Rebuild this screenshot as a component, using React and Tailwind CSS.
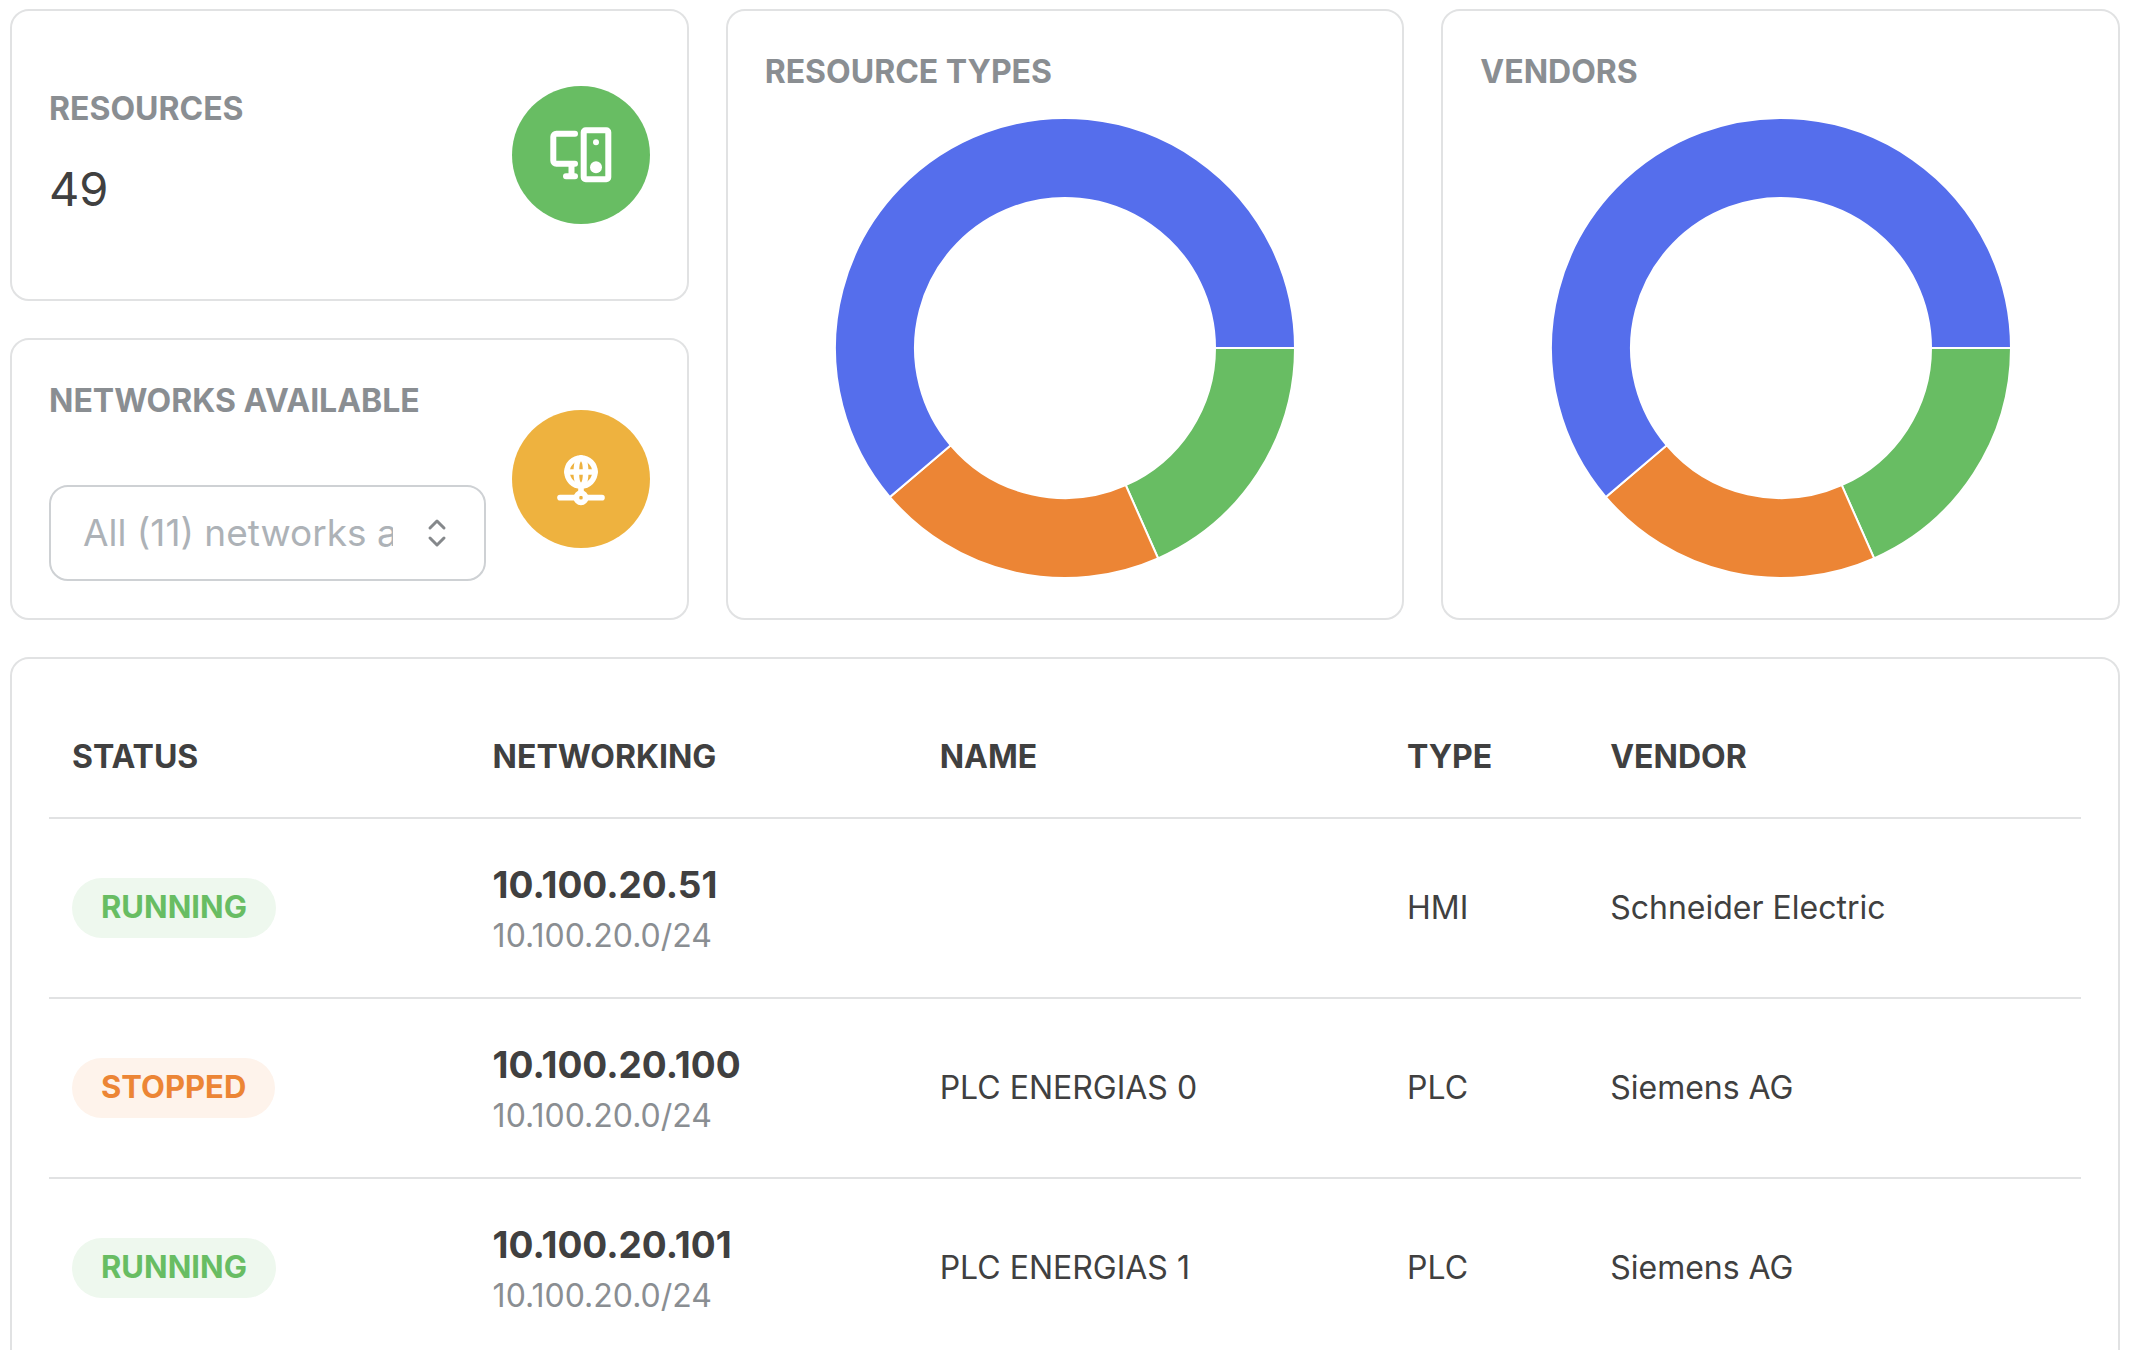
import React, { useState } from "react";
import { TbNetwork } from "react-icons/tb";

const COLORS = {
  green: "#68bd63",
  orange: "#ec8535",
  blue: "#556eec",
};

const resourceTypes = [
  { name: "PLC", value: 9, color: COLORS.green },
  { name: "HMI", value: 10, color: COLORS.orange },
  { name: "Other", value: 30, color: COLORS.blue },
];

const vendors = [
  { name: "Siemens AG", value: 9, color: COLORS.green },
  { name: "Schneider Electric", value: 10, color: COLORS.orange },
  { name: "Other", value: 30, color: COLORS.blue },
];

const resources = [
  {
    status: "RUNNING",
    ip: "10.100.20.51",
    network: "10.100.20.0/24",
    name: "",
    type: "HMI",
    vendor: "Schneider Electric",
  },
  {
    status: "STOPPED",
    ip: "10.100.20.100",
    network: "10.100.20.0/24",
    name: "PLC ENERGIAS 0",
    type: "PLC",
    vendor: "Siemens AG",
  },
  {
    status: "RUNNING",
    ip: "10.100.20.101",
    network: "10.100.20.0/24",
    name: "PLC ENERGIAS 1",
    type: "PLC",
    vendor: "Siemens AG",
  },
];

const badgeStyles = {
  RUNNING: "bg-[#eef8ee] text-[#68bd63]",
  STOPPED: "bg-[#fef3eb] text-[#ec8535]",
};

function Card({ className = "", children }) {
  return (
    <section
      className={`rounded-[19px] border-2 border-[#e1e2e3] bg-white p-[37px] ${className}`}
    >
      {children}
    </section>
  );
}

function CardTitle({ children }) {
  return (
    <h2 className="text-[32px] leading-[48px] font-bold text-[#8a8e92]">
      {children}
    </h2>
  );
}

function DevicesIcon() {
  return (
    <svg
      width="62"
      height="56"
      viewBox="0 0 62 56"
      fill="none"
      stroke="white"
      strokeWidth="6"
      strokeLinecap="round"
      strokeLinejoin="round"
      aria-hidden="true"
    >
      <path d="M25 6.7H6.3a3 3 0 0 0-3 3v24a3 3 0 0 0 3 3H25" />
      <path d="M21.5 37v12M16 49.3h9" />
      <rect x="33.7" y="3.3" width="24.6" height="49" rx="2" />
      <circle cx="46" cy="15.3" r="3" fill="white" stroke="none" />
      <circle cx="46" cy="40.3" r="6" fill="white" stroke="none" />
    </svg>
  );
}

function polar(angle, radius) {
  return `${233 + radius * Math.cos(angle)} ${233 + radius * Math.sin(angle)}`;
}

function Donut({ data, label }) {
  const total = data.reduce((sum, item) => sum + item.value, 0);
  let start = 0;
  const slices = data.map((item) => {
    const end = start + (item.value / total) * Math.PI * 2;
    const large = end - start > Math.PI ? 1 : 0;
    const d = `M${polar(start, 230)}A230 230 0 ${large} 1 ${polar(end, 230)}L${polar(end, 150)}A150 150 0 ${large} 0 ${polar(start, 150)}Z`;
    start = end;
    return { ...item, d };
  });

  return (
    <svg
      className="mx-auto mt-[19px] w-[466px] max-w-full"
      viewBox="0 0 466 466"
      role="img"
      aria-label={label}
    >
      {slices.map((slice) => (
        <path
          key={slice.name}
          d={slice.d}
          fill={slice.color}
          stroke="white"
          strokeWidth="2"
        />
      ))}
    </svg>
  );
}

function NetworkSelect() {
  const [network, setNetwork] = useState("all");

  return (
    <div className="relative mt-[60px]">
      <select
        id="network"
        value={network}
        onChange={(e) => setNetwork(e.target.value)}
        className="block h-[96px] w-full appearance-none rounded-[19px] border-2 border-[#ced1d4] bg-white pr-[91px] pl-[32px] text-[37px] text-[#adb2b7] outline-none"
      >
        <option value="all">All (11) networks available</option>
        <option value="10.100.20.0/24">10.100.20.0/24</option>
      </select>
      <svg
        className="pointer-events-none absolute inset-y-0 right-[38px] my-auto"
        width="22"
        height="32"
        viewBox="0 0 22 32"
        fill="none"
        stroke="#85888b"
        strokeWidth="3"
        strokeLinecap="round"
        strokeLinejoin="round"
        aria-hidden="true"
      >
        <path d="M4 11l7-7 7 7M4 21l7 7 7-7" />
      </svg>
    </div>
  );
}

function App() {
  return (
    <main className="flex flex-col gap-[37px] bg-white pt-[9px] pr-[14px] pl-[10px] font-['Inter',sans-serif] text-[#404040]">
      <div className="grid grid-cols-3 gap-[37px]">
        <div className="flex flex-col gap-[37px]">
          <Card className="flex flex-1 items-center justify-between">
            <div>
              <CardTitle>RESOURCES</CardTitle>
              <p className="mt-5 text-[47px] leading-[72px]">49</p>
            </div>
            <div className="flex size-[138px] shrink-0 items-center justify-center rounded-full bg-[#68bd63]">
              <DevicesIcon />
            </div>
          </Card>

          <Card className="flex items-center justify-between gap-[26px]">
            <div className="min-w-0 flex-1">
              <label htmlFor="network">
                <CardTitle>NETWORKS AVAILABLE</CardTitle>
              </label>
              <NetworkSelect />
            </div>
            <div className="flex size-[138px] shrink-0 items-center justify-center rounded-full bg-[#eeb23f] text-white">
              <TbNetwork size={56} strokeWidth={2.4} />
            </div>
          </Card>
        </div>

        <Card>
          <CardTitle>RESOURCE TYPES</CardTitle>
          <Donut data={resourceTypes} label="Resource types" />
        </Card>

        <Card>
          <CardTitle>VENDORS</CardTitle>
          <Donut data={vendors} label="Vendors" />
        </Card>
      </div>

      <Card>
        <table className="w-full table-fixed border-collapse text-left text-[32px] leading-[48px]">
          <thead>
            <tr className="h-[122px] border-b-2 border-[#e1e2e3]">
              <th className="w-[20.7%] px-[23px] font-bold">STATUS</th>
              <th className="w-[22%] px-[23px] font-bold">NETWORKING</th>
              <th className="w-[23%] px-[23px] font-bold">NAME</th>
              <th className="w-[10%] px-[23px] font-bold">TYPE</th>
              <th className="px-[23px] font-bold">VENDOR</th>
            </tr>
          </thead>
          <tbody>
            {resources.map((item) => (
              <tr key={item.ip} className="border-b-2 border-[#e1e2e3]">
                <td className="px-[23px]">
                  <span
                    className={`flex h-[60px] w-fit items-center rounded-full px-[29px] pb-[2px] text-[31px] font-bold ${badgeStyles[item.status]}`}
                  >
                    {item.status}
                  </span>
                </td>
                <td className="px-[23px] pt-[38px] pb-[37px]">
                  <p className="text-[37px] leading-[55px] font-bold">
                    {item.ip}
                  </p>
                  <p className="text-[#8a8e92]">{item.network}</p>
                </td>
                <td className="px-[23px]">{item.name}</td>
                <td className="px-[23px]">{item.type}</td>
                <td className="px-[23px]">{item.vendor}</td>
              </tr>
            ))}
          </tbody>
        </table>
      </Card>
    </main>
  );
}

export default App;
